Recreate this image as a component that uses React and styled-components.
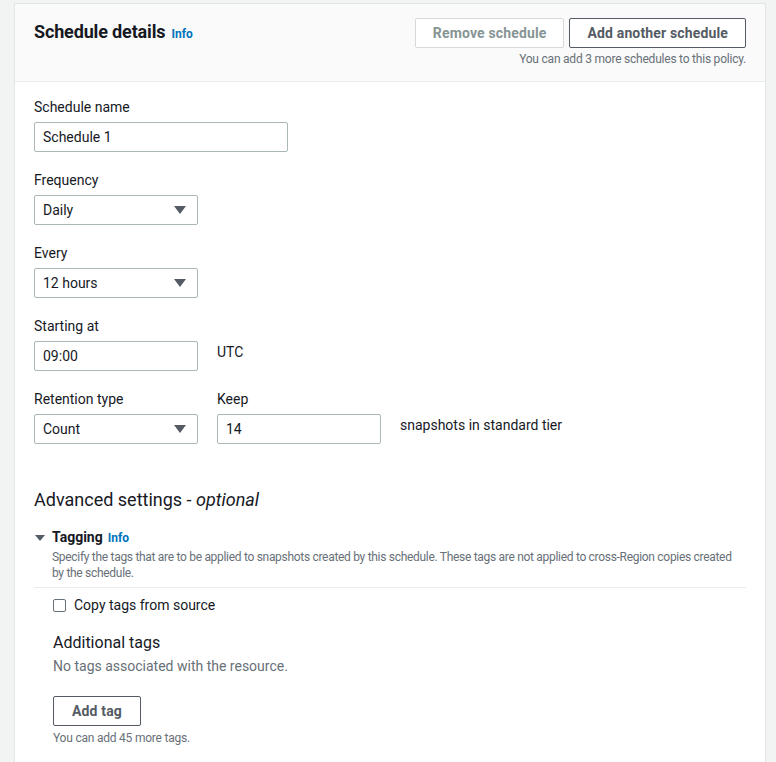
import React from "react";
import styled, { createGlobalStyle } from "styled-components";

const Global = createGlobalStyle`
  html, body { margin: 0; padding: 0; background: #f2f3f3; }
  body { font-family: Roboto, "Liberation Sans", Arial, sans-serif; color: #16191f; }
  * { box-sizing: border-box; }
`;

const Page = styled.div`
  padding: 3px 10px 0 14px;
  min-height: 762px;
`;

const Card = styled.section`
  background: #fff;
  border: 1px solid #e3e6e6;
  border-bottom: none;
  min-height: 759px;
`;

const Header = styled.header`
  background: #fafafa;
  border-bottom: 1px solid #eaeded;
  padding: 14px 19px 14px 19px;
  display: flex;
  justify-content: space-between;
  align-items: flex-start;
`;

const TitleWrap = styled.div`
  display: flex;
  align-items: baseline;
  gap: 6px;
  padding-top: 2px;
`;

const Title = styled.h2`
  margin: 0;
  font-size: 18px;
  line-height: 24px;
  font-weight: 700;
  letter-spacing: -0.15px;
`;

const InfoLink = styled.a`
  color: #0073bb;
  font-size: 12px;
  font-weight: 700;
  text-decoration: none;
`;

const Actions = styled.div`
  display: flex;
  flex-direction: column;
  align-items: flex-end;
  gap: 3px;
`;

const ButtonRow = styled.div`
  display: flex;
  gap: 5px;
`;

const Button = styled.button`
  height: 30px;
  padding: 0 ${(p) => p.$px || 17}px;
  background: #fff;
  border: 1px solid ${(p) => (p.$disabled ? "#d5dbdb" : "#545b64")};
  color: ${(p) => (p.$disabled ? "#879596" : "#545b64")};
  border-radius: 2px;
  font-family: inherit;
  font-size: 14px;
  font-weight: 700;
  letter-spacing: 0.15px;
  cursor: pointer;
`;

const Hint = styled.div`
  font-size: 12px;
  line-height: 16px;
  color: #687078;
  letter-spacing: -0.22px;
  margin-top: ${(p) => p.$mt || 0}px;
`;

const Body = styled.div`
  padding: 14px 19px 0 19px;
  display: flex;
  flex-direction: column;
  gap: 17px;
`;

const Field = styled.div`
  display: flex;
  flex-direction: column;
`;

const Label = styled.label`
  font-size: 14px;
  line-height: 22px;
  margin-bottom: 4px;
`;

const Row = styled.div`
  display: flex;
  align-items: flex-start;
  gap: 19px;
`;

const Input = styled.input`
  width: ${(p) => p.$w}px;
  height: 30px;
  border: 1px solid #aab7b8;
  border-radius: 2px;
  padding: 0 8px;
  font-family: inherit;
  font-size: 14px;
  color: #16191f;
  background: #fff;
  outline: none;
`;

const SelectBox = styled.div`
  width: ${(p) => p.$w}px;
  height: 30px;
  border: 1px solid #aab7b8;
  border-radius: 2px;
  padding: 0 11px 0 8px;
  display: flex;
  align-items: center;
  justify-content: space-between;
  font-size: 14px;
`;

const Caret = styled.span`
  width: 0;
  height: 0;
  border-left: 6px solid transparent;
  border-right: 6px solid transparent;
  border-top: 8px solid #545b64;
`;

const SideText = styled.span`
  font-size: 14px;
  line-height: 22px;
`;

const SectionTitle = styled.h3`
  margin: 27px 0 0;
  font-size: 18px;
  line-height: 24px;
  font-weight: 400;
  em { font-style: italic; }
`;

const Expander = styled.div`
  margin-top: -3px;
`;

const ExpHead = styled.div`
  display: flex;
  align-items: center;
  gap: 7px;
  padding-left: 1px;
`;

const ExpTriangle = styled.span`
  width: 0;
  height: 0;
  border-left: 5px solid transparent;
  border-right: 5px solid transparent;
  border-top: 6px solid #545b64;
`;

const ExpTitle = styled.span`
  font-size: 14px;
  line-height: 22px;
  font-weight: 700;
  color: #16191f;
  display: flex;
  align-items: baseline;
  gap: 5px;
`;

const ExpDesc = styled.p`
  margin: 0 0 0 18px;
  font-size: 12px;
  line-height: 16px;
  color: #687078;
  letter-spacing: -0.3px;
`;

const Divider = styled.hr`
  border: none;
  border-top: 1px solid #eaeded;
  margin: 6px 0 0;
`;

const ExpContent = styled.div`
  padding: 6px 19px 20px 19px;
`;

const CheckRow = styled.label`
  display: flex;
  align-items: center;
  gap: 8px;
  font-size: 14px;
  line-height: 22px;
`;

const Box = styled.span`
  width: 13px;
  height: 13px;
  border: 1px solid #687078;
  border-radius: 2px;
  background: #fff;
`;

const SubHeading = styled.div`
  font-size: 16px;
  line-height: 22px;
  margin-top: 16px;
`;

const Muted = styled.div`
  font-size: 14px;
  line-height: 22px;
  color: #687078;
  margin-top: 1px;
`;

const TagButtonWrap = styled.div`
  margin-top: 19px;
`;

const Select = ({ w, value }) => (
  <SelectBox $w={w}>
    <span>{value}</span>
    <Caret />
  </SelectBox>
);

export default function App() {
  return (
    <>
      <Global />
      <Page>
        <Card>
          <Header>
            <TitleWrap>
              <Title>Schedule details</Title>
              <InfoLink>Info</InfoLink>
            </TitleWrap>
            <Actions>
              <ButtonRow>
                <Button $disabled>Remove schedule</Button>
                <Button>Add another schedule</Button>
              </ButtonRow>
              <Hint>You can add 3 more schedules to this policy.</Hint>
            </Actions>
          </Header>
          <Body>
            <Field>
              <Label>Schedule name</Label>
              <Input $w={254} defaultValue="Schedule 1" />
            </Field>
            <Field>
              <Label>Frequency</Label>
              <Select w={164} value="Daily" />
            </Field>
            <Field>
              <Label>Every</Label>
              <Select w={164} value="12 hours" />
            </Field>
            <Field>
              <Label>Starting at</Label>
              <Row>
                <Input $w={164} defaultValue="09:00" />
                <SideText>UTC</SideText>
              </Row>
            </Field>
            <Row>
              <Field>
                <Label>Retention type</Label>
                <Select w={164} value="Count" />
              </Field>
              <Field>
                <Label>Keep</Label>
                <Row>
                  <Input $w={164} defaultValue="14" />
                  <SideText>snapshots in standard tier</SideText>
                </Row>
              </Field>
            </Row>
            <SectionTitle>
              Advanced settings - <em>optional</em>
            </SectionTitle>
            <Expander>
              <ExpHead>
                <ExpTriangle />
                <ExpTitle>
                  Tagging <InfoLink>Info</InfoLink>
                </ExpTitle>
              </ExpHead>
              <ExpDesc>
                Specify the tags that are to be applied to snapshots created by this schedule. These tags are not applied to cross-Region copies created by the schedule.
              </ExpDesc>
              <Divider />
              <ExpContent>
                <CheckRow>
                  <Box />
                  Copy tags from source
                </CheckRow>
                <SubHeading>Additional tags</SubHeading>
                <Muted>No tags associated with the resource.</Muted>
                <TagButtonWrap>
                  <Button $px={18}>Add tag</Button>
                  <Hint $mt={4}>You can add 45 more tags.</Hint>
                </TagButtonWrap>
              </ExpContent>
            </Expander>
          </Body>
        </Card>
      </Page>
    </>
  );
}
